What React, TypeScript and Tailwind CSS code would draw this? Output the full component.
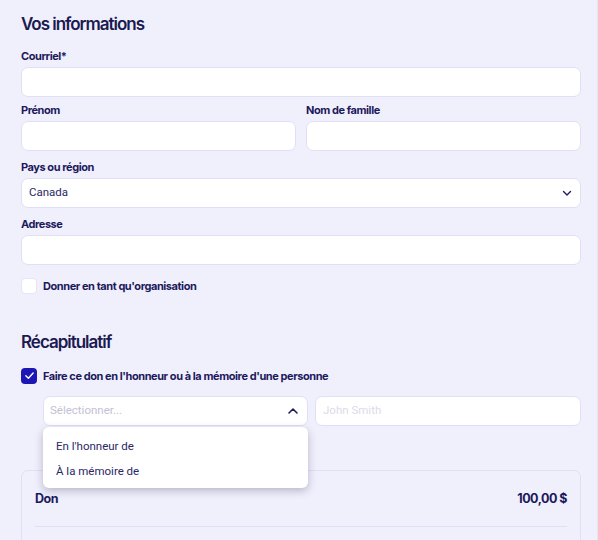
import React from "react";

const labelCls = "block text-[11px] font-bold text-[#1c1a5c] leading-[14px] tracking-[-0.04em] mb-[4px]";
const inputCls = "block w-full h-[30px] rounded-[7px] border border-[#e1dff6] bg-white px-[6px] outline-none";
const roboto = { fontFamily: "Roboto, sans-serif" };

export default function App() {
  return (
    <div className="min-h-[540px] w-[598px] bg-[#f0effc] border-r border-[#e6e4f6] overflow-hidden" style={{ fontFamily: "Inter, 'Noto Sans', sans-serif" }}>
      <div className="pl-[21px] pr-[16px] pt-[14px]">
        <h2 className="text-[17px] font-semibold text-[#1b1a50] leading-5 tracking-[-0.06em] mb-[15px]">Vos informations</h2>

        <label className={labelCls}>Courriel*</label>
        <div className={inputCls}></div>

        <div className="mt-[6px] grid grid-cols-2 gap-[10px]">
          <div>
            <label className={labelCls}>Prénom</label>
            <div className={inputCls}></div>
          </div>
          <div>
            <label className={labelCls}>Nom de famille</label>
            <div className={inputCls}></div>
          </div>
        </div>

        <div className="mt-[9px]">
          <label className={labelCls}>Pays ou région</label>
          <div className={inputCls + " flex items-center justify-between"} style={roboto}>
            <span className="pl-[1px] text-[11.5px] text-[#2a2766]">Canada</span>
            <svg width="12" height="12" viewBox="0 0 12 12" className="mr-[1px]">
              <path d="M2.5 4.5 L6 8 L9.5 4.5" fill="none" stroke="#1f1c5e" strokeWidth="1.4" strokeLinecap="round" strokeLinejoin="round" />
            </svg>
          </div>
        </div>

        <div className="mt-[9px]">
          <label className={labelCls}>Adresse</label>
          <div className={inputCls}></div>
        </div>

        <div className="mt-[13px] flex items-center gap-[6px]">
          <span className="block w-[16px] h-[16px] rounded-[4px] bg-white border border-[#e6e4f7]"></span>
          <span className="text-[11px] font-bold text-[#1c1a5c] tracking-[-0.04em]">Donner en tant qu'organisation</span>
        </div>

        <h2 className="mt-[37px] text-[17px] font-semibold text-[#1b1a50] leading-5 tracking-[-0.06em]">Récapitulatif</h2>

        <div className="mt-[16px] flex items-center gap-[6px]">
          <span className="flex items-center justify-center w-[16px] h-[16px] rounded-[4px] bg-[#1c17b3]">
            <svg width="11" height="11" viewBox="0 0 12 12">
              <path d="M2 6.3 L4.8 9 L10 3.2" fill="none" stroke="white" strokeWidth="1.5" strokeLinecap="round" strokeLinejoin="round" />
            </svg>
          </span>
          <span className="text-[11px] font-bold text-[#1c1a5c] tracking-[-0.04em]">Faire ce don en l'honneur ou à la mémoire d'une personne</span>
        </div>

        <div className="mt-[12px] ml-[22px] flex gap-[7px]" style={roboto}>
          <div className="relative w-[265px]">
            <div className={inputCls + " flex items-center justify-between"}>
              <span className="text-[11.5px] text-[#c3c1d4]">Sélectionner...</span>
              <svg width="12" height="12" viewBox="0 0 12 12" className="mr-[2px]">
                <path d="M2 8 L6 4 L10 8" fill="none" stroke="#1f1c5e" strokeWidth="1.6" strokeLinecap="round" strokeLinejoin="round" />
              </svg>
            </div>
            <div className="absolute z-10 left-0 top-[31px] w-full rounded-[6px] bg-white shadow-[0_3px_8px_rgba(40,40,80,0.28)] pt-[7px] pb-[4px]">
              <div className="px-[13px] h-[25px] flex items-center text-[11.5px] text-[#2a2766]">En l'honneur de</div>
              <div className="px-[13px] h-[25px] flex items-center text-[11.5px] text-[#2a2766]">À la mémoire de</div>
            </div>
          </div>
          <div className="flex-1">
            <div className={inputCls + " flex items-center"}>
              <span className="pl-[1px] text-[11.5px] text-[#dddbe8]">John Smith</span>
            </div>
          </div>
        </div>

        <div className="mt-[44px] rounded-[7px] border border-[#e1dff6] bg-[#f0effc] px-[13px] pt-[21px] h-[120px]">
          <div className="flex items-center justify-between leading-[14px]">
            <span className="text-[12.5px] font-bold text-[#1c1a5c] tracking-[-0.04em]">Don</span>
            <span className="text-[12.5px] font-bold text-[#1c1a5c] tracking-[-0.04em]">100,00 $</span>
          </div>
          <div className="mt-[20px] border-t border-[#e1dff6]"></div>
        </div>
      </div>
    </div>
  );
}
